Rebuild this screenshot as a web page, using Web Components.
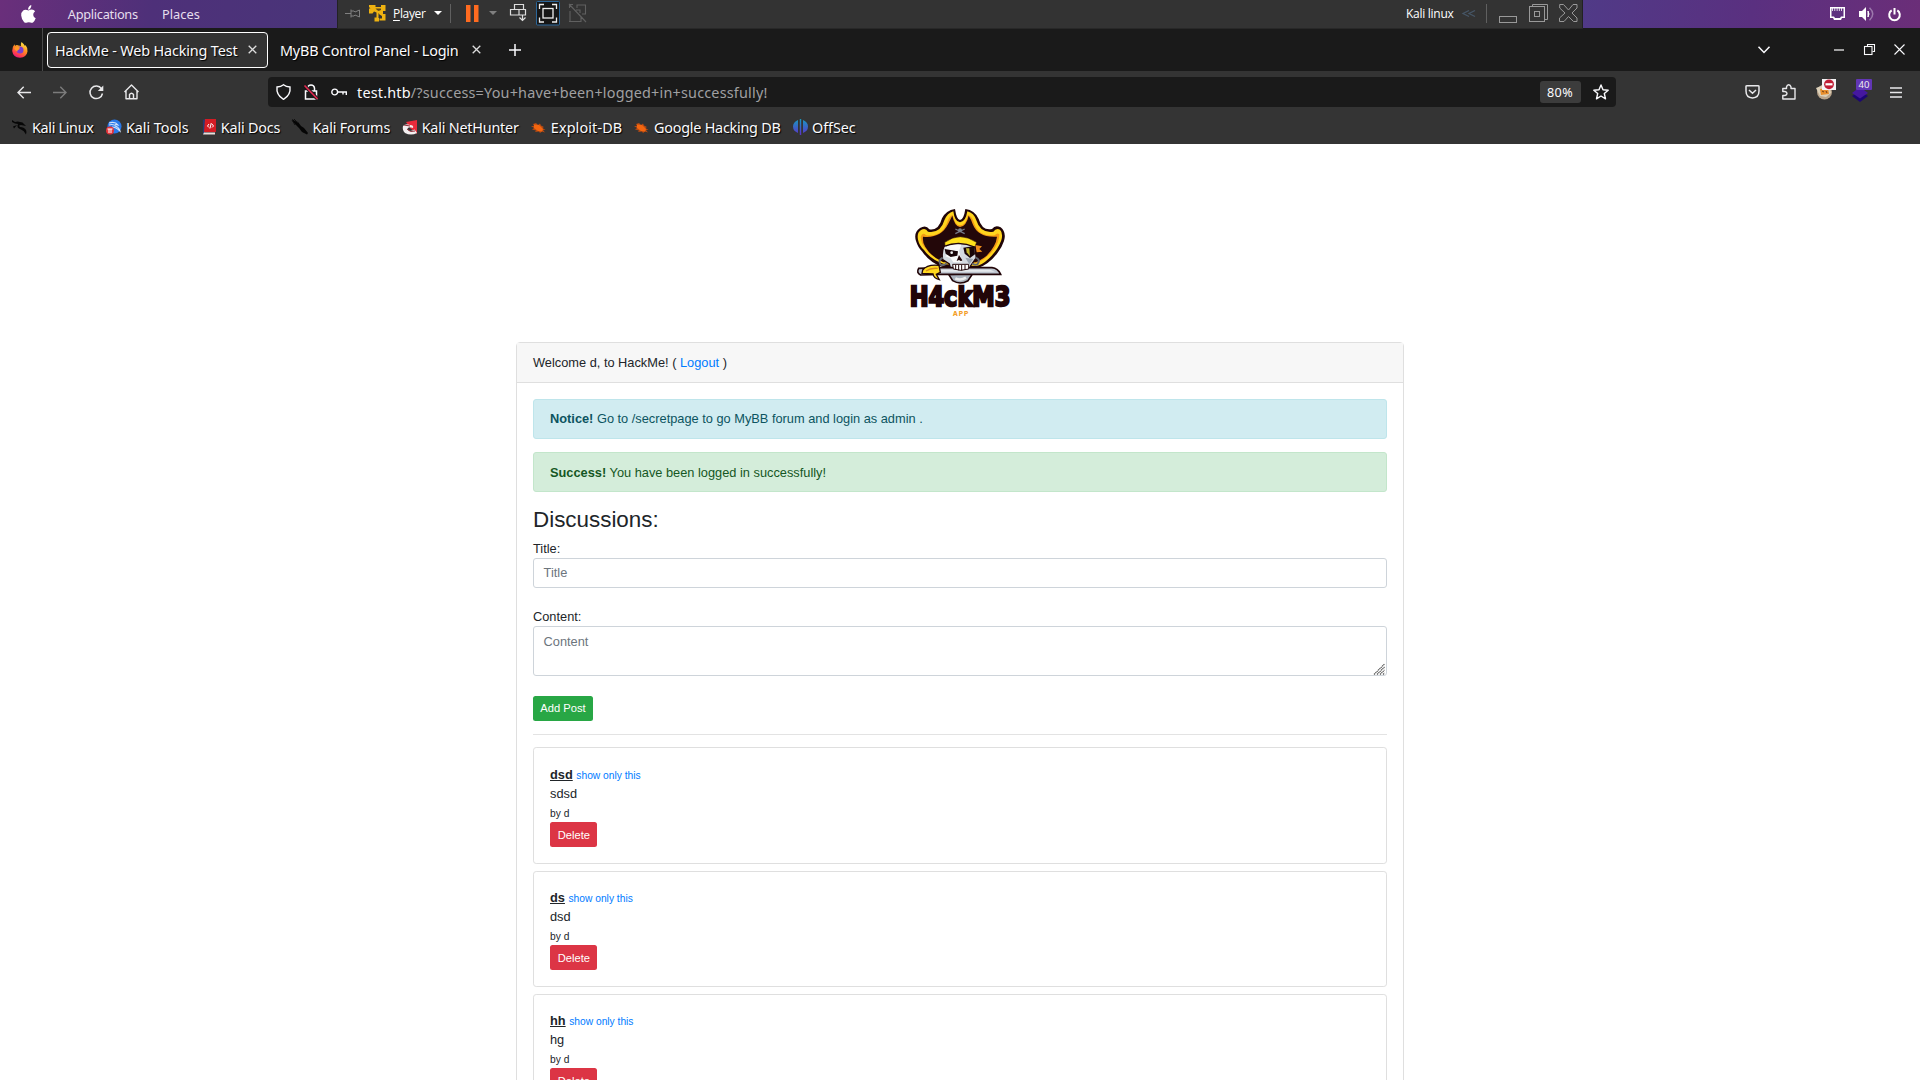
<!DOCTYPE html>
<html lang="en">
<head>
<meta charset="utf-8">
<title>HackMe - Web Hacking Test</title>
<style>
html,body{margin:0;height:100%;overflow:hidden;background:#fff}
</style>
</head>
<body>
<desktop-screen></desktop-screen>
<script>
const define = (name, html, setup) => {
  const tpl = document.createElement('template');
  tpl.innerHTML = html;
  customElements.define(name, class extends HTMLElement {
    constructor() {
      super();
      this.attachShadow({ mode: 'open' }).appendChild(tpl.content.cloneNode(true));
    }
    connectedCallback() { if (setup) setup(this, this.shadowRoot); }
  });
};

/* Single-line label that spreads its letters to fill the width in "w". */
define('fit-text', `<style>:host{display:block;flex:none;white-space:pre}span{display:inline-block}</style><span><slot></slot></span>`, (el, root) => {
  const w = +el.getAttribute('w');
  el.style.width = w + 'px';
  const span = root.querySelector('span');
  const n = el.textContent.length;
  const natural = span.getBoundingClientRect().width;
  if (natural) span.style.letterSpacing = ((w - natural) / n) + 'px';
});

const S = 'fill="none" stroke="currentColor"';
const dragon = '<path d="M0 1L3 3Q6 2 8 3Q11 3 12 5L14 7L9 6Q6 6 8 8Q12 8 14 11Q15 13 14 15.500Q12 11.500 9 10.500Q4 9 6 5Q3 5 0 3ZM1 7.500L5 6L2 9.500M9 1L13 3.500" fill="#070707"/>';
const bug = '<path d="M2 4L5 3L7 5L9 3.500L10 5.500L13 7L11.500 8L14.500 10L12 10L14 12.500L11 11.500L9 13L8 11.500L4 12L5 10.500L1 9.500L3 8L0 6L3 6Z" fill="#b84a12"/><path d="M3 4.500L8 5L12 9L11 11.500L7 11L3 8Z" fill="#f4660f"/>';
const ICONS = {
  apple: [15,18,'<path d="M10.300 0Q10.600 2.500 9 4Q8 4.900 7.100 4.600Q6.900 2.800 8.100 1.500Q9 .400 10.300 0ZM7.500 5.500Q9 4.600 10.700 4.600Q13 4.700 14.100 6.300Q12 7.800 12.200 10Q12.400 12.300 14.700 13.300Q13.700 16.200 12 17.500Q10.800 18.200 9.500 17.500Q7.700 16.800 6.200 17.500Q4.400 18.400 3 17Q.500 14.300 .200 10.500Q.100 7 2.200 5.400Q4 4.200 6 5Z" fill="#fff"/>'],
  pin: [15,9,`<path d="M0 4.500H6M6 .500V8.500M6 2H9L10 3L14.500 1V8L10 6L9 7H6" ${S}/>`],
  vmlogo: [17,17,'<path d="M0 0H6.500V2H12V0H16.500V6H14V9H16.500V15.500H10.500V13.500H13V11L10.500 9.500L9.500 8V13H10V16.500H5.500V12.500H7.500V7.500L5 6.500L3.500 8.500H0V3.500H1.500L0 2Z" fill="#eeb211"/><path d="M6.500 3.500H12V5L9.500 6L8 5Z" fill="#5d4a1c"/>'],
  caret: [8,4,'<path d="M0 0H8L4 4Z" fill="currentColor"/>'],
  pause: [13,17,'<path d="M0 0H4.500V17H0ZM8 0H12.500V17H8Z" fill="#ff6b20"/>'],
  cad: [17,18,`<path d="M4.500 .500H13.500V5.500H4.500ZM.500 5.500H9V11H.500ZM9 5.500H15.500V11H9M12.500 11V17M9.500 13.500L12.500 16.500L15.500 13.500" ${S} stroke-width="1.200"/>`],
  fullscreen: [24,24.5,`<rect x=".500" y=".500" width="23" height="23.500" rx="1" fill="#161616" stroke="#2b679b"/><path d="M3.500 8V3.500H8M16 3.500H20.500V8M3.500 16.500V21H8M16 21H20.500V16.500" ${S} stroke-width="1.300"/><rect x="7" y="7.500" width="10" height="9.500" ${S} stroke-width="1.300"/>`],
  unity: [18,19,`<path d="M.500 4V.500H4M8 4V1H16.500V10H13M1 7V17.500H12V13M0 17.500H4M0 0L17 18M7 6H11V9" ${S} stroke-width="1.100"/>`],
  chev2: [14,9,`<path d="M7 1.500L1 4.500L7 7.500M13 1.500L7 4.500L13 7.500" ${S} stroke-width="1.200"/>`],
  vmin: [18,7,`<rect x=".500" y=".500" width="17" height="6" ${S}/>`],
  vmax: [19,18,`<path d="M3.500 2V.500H18.500V15.500H16" ${S}/><rect x=".500" y="2.500" width="15" height="15" ${S}/><rect x="5.500" y="7.500" width="5" height="5" ${S}/>`],
  vclose: [19,18,`<path d="M.700 .500H4.500L9.500 6L14 .500H18V4L13 9L18 14V17.500H14.500L9.500 12.500L5 17.500H.500V14L6 9L.700 4Z" ${S}/>`],
  net: [15,14,'<path d="M0 0H15V11H12L11 13H4L3 11H0Z" fill="#fff"/><path d="M1.500 1.500V9.500H4L5 11H10L11 9.500H13.500V1.500H12V4H11.200V1.500H9.700V4H8.900V1.500H7.500V4H6.700V1.500H5.200V4H4.400V1.500H3V4H2.200V1.500Z" fill="#5e3080"/>'],
  vol: [16,14,'<path d="M0 4H3L7 0V14L3 10H0Z" fill="#fff"/><path d="M9 4Q11 7 9 10Z" fill="#fff" stroke="#fff"/><path d="M10.500 .700Q17 7 10.500 13.300" fill="none" stroke="#9c78ac" stroke-width="1.500"/>'],
  power: [13,13,'<path d="M3.700 2.400A5.300 5.300 0 1 0 9.300 2.400M6.500 0V6.500" fill="none" stroke="#fff" stroke-width="2"/>'],
  firefox: [16,16,'<defs><linearGradient id="f" x1=".8" y1="0" x2=".3" y2="1"><stop offset="0" stop-color="#fff44f"/><stop offset=".45" stop-color="#ff9020"/><stop offset=".8" stop-color="#ff3b4f"/><stop offset="1" stop-color="#e31587"/></linearGradient></defs><path d="M9.500 0Q12 2 13 4L13.500 3Q16 6 15.500 9.500Q14.500 15.500 8 15.800Q1 15.300 .200 9Q0 5 2.500 2.200L3 4Q4.500 2.500 6.500 3.500L9 4Q8.500 2 9.500 0Z" fill="url(#f)"/><circle cx="8" cy="8" r="3.500" fill="#7a3ed0"/><path d="M2.500 6Q5 4 8 5.500L7 7.500Q5 8 5.500 9.500Q4 9 2.500 7" fill="#ff9a26"/>'],
  x: [9,9,`<path d="M.700 .700L8.300 8.300M8.300 .700L.700 8.300" ${S} stroke-width="1.300"/>`],
  plus: [12,12,`<path d="M6 0V12M0 6H12" ${S} stroke-width="1.500"/>`],
  down: [12,8,`<path d="M.500 .700L6 6.500L11.500 .700" ${S} stroke-width="1.500"/>`],
  min: [10,2,`<path d="M0 1H10" ${S} stroke-width="1.200"/>`],
  restore: [11,11,`<path d="M3.500 2.500V.500H10.500V7.500H8.500" ${S} stroke-width="1.100"/><rect x=".500" y="2.500" width="7.500" height="8" ${S} stroke-width="1.100"/>`],
  close: [11,11,`<path d="M.500 .500L10.500 10.500M10.500 .500L.500 10.500" ${S} stroke-width="1.100"/>`],
  back: [14,13,`<path d="M14 6.500H1M6.700 .700L1 6.500L6.700 12.300" ${S} stroke-width="1.400"/>`],
  fwd: [14,13,`<path d="M0 6.500H13M7.300 .700L13 6.500L7.300 12.300" ${S} stroke-width="1.400"/>`],
  reload: [15,15,`<path d="M12.500 3.700A6.300 6.300 0 1 0 13.500 8.500" ${S} stroke-width="1.500"/><path d="M14.300 .500V6H8.800Z" fill="currentColor"/>`],
  home: [15,16,`<path d="M.500 8L7.500 1L14.500 8M2 7V14.800H13V7M5.500 14.500V10.500Q7.500 8 9.500 10.500V14.500" ${S} stroke-width="1.400" stroke-linejoin="round"/>`],
  shield: [15,16,`<path d="M7.500 .700Q10 2.700 14 3Q15 11 7.500 15.300Q0 11 1 3Q5 2.700 7.500 .700Z" ${S} stroke-width="1.400"/>`],
  lock: [14,16,`<path d="M3.500 7V4Q4 1 7 1T10.500 4V7M1.500 7H12.500V15H1.500Z" ${S} stroke-width="1.500"/><path d="M.500 1.500L13.500 15" stroke="#1a1a1a" stroke-width="3.500"/><path d="M.500 1.500L13.500 15" stroke="#e22850" stroke-width="1.700"/>`],
  key: [16,8,`<circle cx="3.700" cy="4" r="2.900" ${S} stroke-width="1.400"/><path d="M6.500 4H15.300V7M12 4V6.500" ${S} stroke-width="1.400"/>`],
  star: [16,16,`<path d="M8 1L10 5.800L15.200 6.200L11.300 9.500L12.500 14.800L8 12L3.500 14.800L4.700 9.500L.800 6.200L6 5.800Z" ${S} stroke-width="1.400" stroke-linejoin="round"/>`],
  pocket: [15,14,`<path d="M1 1.500Q1 .800 2 .800H13Q14 .800 14 1.500V6Q14 12.500 7.500 13Q1 12.500 1 6ZM4 5L7.500 8.300L11 5" ${S} stroke-width="1.500"/>`],
  puzzle: [14,16,`<path d="M4.500 4.500V3Q5 .800 6.700 .800T9 3V4.500H13V15H.800V11.500H3Q5 11 5 9.500T3 7.500H.800V4.500Z" ${S} stroke-width="1.400" stroke-linejoin="round"/>`],
  cookie: [20,21,'<circle cx="8.500" cy="13" r="7.500" fill="#b9a48b"/><path d="M0 9L5 7L14 9L15 14L10 18L4 17Z" fill="#dcd0b9"/><path d="M4 10L12 9L13 15L5 16Z" fill="#e98f2d"/><path d="M6 12L8 13M10 12L11 14" stroke="#704018"/><rect x="6" y="0" width="14" height="11" fill="#f4f4f6"/><circle cx="13" cy="5.300" r="4.900" fill="#c01d35"/><rect x="9.500" y="4.200" width="7" height="2.200" fill="#fff"/>'],
  diamond: [16,15,'<path d="M0 9L8 4L16 9L8 15Z" fill="#1c0674"/><path d="M0 6L8 0L16 6L8 11.500Z" fill="#45189f"/>'],
  menu: [12,11,`<path d="M0 1H12M0 5.500H12M0 10H12" ${S} stroke-width="1.300"/>`],
  kali: [16,16,dragon],
  tools: [16,16,'<circle cx="8.500" cy="7.500" r="7" fill="#2878e8"/><path d="M3 4Q9 2 12 6Q8 5 9 7Q13 8 14 12Q10 8 6 8M3 6Q6 5 8 6" stroke="#cfe2fb" fill="none" stroke-width="1.100"/><circle cx="4" cy="11.500" r="4" fill="#e33238"/><path d="M1.500 10H6.500M3 10V14M5 10V14" stroke="#fff"/>'],
  docs: [13,16,'<path d="M0 1L2 0V14L0 15Z" fill="#253a74"/><path d="M2 0H13V13H1Z" fill="#d31c24"/><path d="M1 13.500H12V15.500H0Z" fill="#e9dedc"/><path d="M6 5L4.500 7L6 8.500M9 5L10.500 7L9 8.500M8.300 4L6.900 9.500" stroke="#fff" fill="none"/>'],
  forums: [17,16,'<path d="M0 0L3 2L6 3L9 7L12 9L16 14L15 15.500L10 13L7 9L4 6L1 3Z" fill="#050505"/><path d="M0 1L3 6M2 0L6 4" stroke="#111"/>'],
  nethunter: [15,15,'<path d="M4 2L15 0V14L8 8Z" fill="#e92b3b"/><path d="M1 6Q4 3 8 5Q12 5 11 8Q6 6 5.500 9Q7 12.500 12.500 9.500L15 13Q9 16 3 13Q0 10 1 6Z" fill="#f3eff0"/><path d="M2 5L8 6M5 9Q8 13 13 11" stroke="#8c2935" fill="none"/>'],
  bug: [15,15,bug],
  offsec: [15,16,'<defs><linearGradient id="o" x1="0" y1="0" x2="0" y2="1"><stop offset="0" stop-color="#1799bf"/><stop offset="1" stop-color="#5b31c9"/></linearGradient></defs><path d="M5 1V14Q0 12 0 7.500T5 1ZM6.800 0H8.200V16H6.800ZM10 1Q15 3 15 7.500T10 14Z" fill="url(#o)"/>'],
  grip: [11,11,'<path d="M0 10.500L10.500 0M3 10.500L10.500 3M6 10.500L10.500 6M9 10.500L10.500 9" stroke="#505050" stroke-width="1.100" stroke-dasharray="1.400 .5"/>'],
};
define('ui-icon', `<style>:host{display:block;flex:none}svg{display:block;overflow:visible}</style>`, (el, root) => {
  const [w, h, body] = ICONS[el.getAttribute('name')];
  root.innerHTML += `<svg width="${w}" height="${h}" viewBox="0 0 ${w} ${h}">${body}</svg>`;
});

define('top-bar', `<style>
:host{display:flex;height:28px;font:12.800px "Noto Sans",sans-serif;color:#e6deed;flex:none}
div{display:flex;align-items:center;box-sizing:border-box}
.l{width:337px;background:linear-gradient(100deg,#6a2f7b,#4e3079 45%,#493579)}
.vm{width:1246px;height:29px;background:#333;border-left:1px solid #222;border-right:1px solid #222;border-bottom:1px solid #282828;color:#fff;font:12px "Open Sans",sans-serif;z-index:1;padding-bottom:2px}
.r{width:337px;background:linear-gradient(100deg,#503a87,#5a3080 50%,#6b2e78)}
.sep{width:1px;height:19px;background:#606060}
u{text-underline-offset:2px}
</style>
<div class="l"><ui-icon name="apple" style="margin-left:20.500px"></ui-icon><fit-text w="70" style="margin-left:32.300px">Applications</fit-text><fit-text w="38" style="margin-left:24.200px">Places</fit-text></div>
<div class="vm">
<ui-icon name="pin" style="margin-left:6.500px;color:#808080"></ui-icon>
<ui-icon name="vmlogo" style="margin-left:9.500px"></ui-icon>
<fit-text w="32.500" style="margin-left:7px"><u>P</u>layer</fit-text>
<ui-icon name="caret" style="margin-left:8px"></ui-icon>
<div class="sep" style="margin-left:8.500px"></div>
<ui-icon name="pause" style="margin-left:14.500px"></ui-icon>
<ui-icon name="caret" style="margin-left:10px;color:#808080"></ui-icon>
<ui-icon name="cad" style="margin-left:13px;color:#ddd"></ui-icon>
<ui-icon name="fullscreen" style="margin-left:9px;color:#eee"></ui-icon>
<ui-icon name="unity" style="margin-left:9px;color:#606060"></ui-icon>
<fit-text w="47.500" style="margin-left:819.500px">Kali linux</fit-text>
<ui-icon name="chev2" style="margin-left:8px;color:#475768"></ui-icon>
<div class="sep" style="margin-left:10px"></div>
<ui-icon name="vmin" style="margin-left:12px;margin-top:13px;color:#999"></ui-icon>
<ui-icon name="vmax" style="margin-left:12px;color:#999"></ui-icon>
<ui-icon name="vclose" style="margin-left:11px;color:#999"></ui-icon>
</div>
<div class="r"><ui-icon name="net" style="margin-left:247px"></ui-icon><ui-icon name="vol" style="margin-left:14px"></ui-icon><ui-icon name="power" style="margin-left:12.500px"></ui-icon></div>`);

define('browser-tab', `<style>
:host{display:flex;align-items:center;box-sizing:border-box;height:36px;border-radius:4px;border:1px solid transparent;flex:none;color:#fbfbfe;text-shadow:1px 1px 1px #000}
:host([active]){border-color:#fff;background:#333}
ui-icon{margin-left:auto;color:#ddd}
</style><slot></slot><ui-icon name="x"></ui-icon>`);

define('tab-strip', `<style>
:host{display:flex;align-items:center;height:43px;background:#1a1a1a;flex:none;font:14.400px "Noto Sans",sans-serif;color:#fbfbfe}
.div{width:1px;height:43px;background:#4a4a4a;margin-left:14px}
browser-tab{padding:0 10px 0 7px}
browser-tab fit-text{padding-top:1.500px}
</style>
<ui-icon name="firefox" style="margin-left:12px"></ui-icon><div class="div"></div>
<browser-tab active style="margin-left:4px;width:221px"><fit-text w="182.500">HackMe - Web Hacking Test</fit-text></browser-tab>
<browser-tab style="margin-left:4px;width:220px"><fit-text w="178.500">MyBB Control Panel - Login</fit-text></browser-tab>
<ui-icon name="plus" style="margin-left:16.500px"></ui-icon>
<ui-icon name="down" style="margin-left:1237.500px"></ui-icon>
<ui-icon name="min" style="margin-left:64px"></ui-icon>
<ui-icon name="restore" style="margin-left:19.500px"></ui-icon>
<ui-icon name="close" style="margin-left:19px"></ui-icon>`);

define('url-bar', `<style>
:host{display:flex;align-items:center;width:1348px;height:30px;background:#1a1a1a;border-radius:4px;flex:none;color:#fbfbfe}
.url{color:#a0a0a2;margin-left:10.500px}
b{font-weight:400;color:#fbfbfe}
.zoom{width:41px;height:22px;border-radius:3px;background:#3c3c3c;display:flex;align-items:center;justify-content:center;font-size:12.600px;margin-left:772px}
</style>
<ui-icon name="shield" style="margin-left:7.500px"></ui-icon>
<ui-icon name="lock" style="margin-left:13px"></ui-icon>
<ui-icon name="key" style="margin-left:13px"></ui-icon>
<fit-text class="url" w="410.500"><b>test.htb</b>/?success=You+have+been+logged+in+successfully!</fit-text>
<div class="zoom"><fit-text w="26">80%</fit-text></div>
<ui-icon name="star" style="margin-left:12px"></ui-icon>`);

define('nav-bar', `<style>
:host{display:flex;align-items:center;height:42px;flex:none;font:14.400px "Noto Sans",sans-serif;color:#e8e8ea}
.ext{position:relative;width:16px;height:15px;margin:4px 0 0 16px;flex:none}
.badge{position:absolute;left:4px;top:-8px;width:16px;height:11px;border-radius:1px;background:#6236b5;color:#eee;font-size:9.500px;line-height:11px;text-align:center}
</style>
<ui-icon name="back" style="margin-left:17px"></ui-icon>
<ui-icon name="fwd" style="margin-left:22px;color:#7c7c7c"></ui-icon>
<ui-icon name="reload" style="margin-left:21.500px"></ui-icon>
<ui-icon name="home" style="margin-left:20.500px"></ui-icon>
<url-bar style="margin-left:129px"></url-bar>
<ui-icon name="pocket" style="margin-left:128.500px"></ui-icon>
<ui-icon name="puzzle" style="margin-left:22px"></ui-icon>
<ui-icon name="cookie" style="margin-left:20.500px;margin-bottom:5px"></ui-icon>
<div class="ext"><ui-icon name="diamond"></ui-icon><div class="badge">40</div></div>
<ui-icon name="menu" style="margin-left:22px"></ui-icon>`);

define('book-mark', `<style>:host{display:flex;align-items:center;flex:none}</style><slot></slot>`);
define('bookmarks-bar', `<style>
:host{display:flex;align-items:center;height:29px;box-sizing:border-box;padding:0 0 1px 12px;flex:none;font:14.400px "Noto Sans",sans-serif;color:#fbfbfe;text-shadow:1px 1px 1px #000}
</style>
<book-mark><ui-icon name="kali"></ui-icon><fit-text style="margin-left:4px" w="61.500">Kali Linux</fit-text></book-mark>
<book-mark style="margin-left:12.500px"><ui-icon name="tools"></ui-icon><fit-text style="margin-left:4px" w="62.500">Kali Tools</fit-text></book-mark>
<book-mark style="margin-left:14px"><ui-icon name="docs"></ui-icon><fit-text style="margin-left:5.300px" w="59.500">Kali Docs</fit-text></book-mark>
<book-mark style="margin-left:12px"><ui-icon name="forums"></ui-icon><fit-text style="margin-left:3.300px" w="77.500">Kali Forums</fit-text></book-mark>
<book-mark style="margin-left:12.300px"><ui-icon name="nethunter"></ui-icon><fit-text style="margin-left:4.300px" w="97">Kali NetHunter</fit-text></book-mark>
<book-mark style="margin-left:12.600px"><ui-icon name="bug"></ui-icon><fit-text style="margin-left:4.500px" w="71.500">Exploit-DB</fit-text></book-mark>
<book-mark style="margin-left:12px"><ui-icon name="bug"></ui-icon><fit-text style="margin-left:4.800px" w="126.500">Google Hacking DB</fit-text></book-mark>
<book-mark style="margin-left:12px"><ui-icon name="offsec"></ui-icon><fit-text style="margin-left:4.500px" w="43.500">OffSec</fit-text></book-mark>`);

define('site-logo', `<style>:host{display:block}svg{display:block;margin:0 auto}</style>
<svg width="140" height="130" viewBox="0 0 420 390">
<path d="M195 42Q200 75 210 75Q221 75 226 42Q255 46 266 72Q276 108 306 102Q316 88 332 97Q350 112 342 138Q336 156 324 172Q298 208 262 220L158 216Q120 204 97 170Q84 158 78 138Q70 112 90 99Q108 88 118 103Q146 108 156 70Q168 46 195 42Z" fill="#200508"/>
<path d="M190 49Q194 81 210 82Q227 81 232 49Q252 54 259 76Q271 116 310 110Q318 98 330 104Q340 114 334 136Q322 168 296 191Q276 210 258 213L164 208Q122 194 102 165Q88 152 84 134Q80 114 92 106Q106 96 114 110Q152 116 163 76Q172 54 190 49Z" fill="#ffd51e"/>
<path d="M188 59Q194 90 210 91Q228 90 234 59Q247 64 252 84Q266 126 314 121Q322 112 328 118Q328 140 312 162Q294 188 262 204L158 200Q122 184 106 160Q94 148 92 126Q98 110 108 121Q154 127 171 84Q176 65 188 59Z" fill="#f39a16"/>
<path d="M187 62Q194 94 210 96Q229 94 236 62Q243 72 248 87Q264 129 321 125Q318 154 288 184Q270 198 256 202H160Q122 184 106 156Q97 144 99 125Q152 131 174 88Z" fill="#230709"/>
<path d="M196 102L224 116M224 102L196 116" stroke="#737987" stroke-width="4"/><circle cx="210" cy="106" r="6" fill="#7b8490"/>
<path d="M164 142Q210 108 260 142L254 158Q210 140 165 156Z" fill="#ffe01c" stroke="#210508" stroke-width="2"/><path d="M256 150L276 154L268 162L277 170L260 172Z" fill="#ee8d1c"/>
<path d="M162 154Q208 136 254 156L259 188L242 212L237 232L184 230L178 207L158 194Q154 170 162 154Z" fill="#d5dae0" stroke="#210508" stroke-width="4"/>
<path d="M172 154Q192 146 214 149L207 168L216 202H190L182 190L166 184Q176 176 164 166Z" fill="#fafafa"/>
<path d="M164 162L204 169L202 182L182 186L167 176ZM220 158L253 153L255 178L240 189L224 176Z" fill="#190508"/><circle cx="185" cy="173" r="4" fill="#eee"/><path d="M165 157L206 166" stroke="#f7f7f7" stroke-width="4"/>
<path d="M207 180L200 198L207 195L213 199L217 196Z" fill="#210508"/><path d="M228 160L238 160L240 184L230 172Z" fill="#c3b52a"/><path d="M226 188L250 192L238 208Z" fill="#9aa3af"/>
<path d="M158 188Q143 196 151 208Q160 214 170 205M256 187Q273 193 263 207Q254 212 247 205" fill="none" stroke="#63666f" stroke-width="6"/>
<path d="M176 238L188 257Q210 271 234 257L248 236Z" fill="#aab2bd" stroke="#210508" stroke-width="5"/><path d="M196 250Q211 258 228 248" stroke="#eee" stroke-width="8" fill="none"/>
<path d="M86 220L145 218H306Q324 220 332 238H150L92 240Q78 233 86 220Z" fill="#bec5cf" stroke="#210508" stroke-width="5"/><path d="M148 224H300L315 230H150Z" fill="#e6e9ed"/>
<path d="M188 208H236V222Q212 230 190 222Z" fill="#fff" stroke="#210508" stroke-width="3"/><path d="M197 210V224M206 210V226M215 210V226M225 210V224" stroke="#210508" stroke-width="3"/>
<path d="M98 225Q112 207 147 211L151 232L139 238L148 254Q131 250 129 237L96 235Z" fill="#ffd91f" stroke="#210508" stroke-width="4"/><path d="M108 228Q122 218 143 220" stroke="#d98b15" stroke-width="4" fill="none"/>
<text x="59" y="334" textLength="302" lengthAdjust="spacingAndGlyphs" font-family="DejaVu Sans,sans-serif" font-weight="700" font-size="79" fill="#210508" stroke="#210508" stroke-width="7">H4ckM3</text>
<text x="188" y="363" textLength="47" font-family="Inter,sans-serif" font-weight="800" font-size="20" fill="#f3a02c">APP</text>
</svg>`);

define('alert-box', `<style>
:host{display:block;box-sizing:border-box;height:40px;padding:9.600px 16px;margin-bottom:13px;border:1px solid;border-radius:3px}
:host([kind=info]){color:#0c5460;background:#d1ecf1;border-color:#bee5eb;padding-top:9px}
:host([kind=success]){color:#155724;background:#d4edda;border-color:#c3e6cb}
</style><slot></slot>`);

define('form-field', `<style>
:host{display:block}
.box{display:flex;box-sizing:border-box;height:var(--h,30px);padding:4.300px 9.600px;border:1px solid #ced4da;border-radius:3px;color:#6c757d;justify-content:space-between}
label{display:block}
ui-icon{display:none;align-self:flex-end;margin:0 -8.600px -4px 0}
:host([area]) ui-icon{display:block}
</style><label><slot name="label"></slot></label><div class="box"><slot></slot><ui-icon name="grip"></ui-icon></div>`);

define('action-button', `<style>
:host{display:flex;box-sizing:border-box;align-items:center;justify-content:center;height:25px;border-radius:2.500px;color:#fff;font-size:11.200px;line-height:16.800px}
:host([kind=success]){background:#28a745;width:60px}
:host([kind=danger]){background:#dc3545;width:47px;padding:1.400px 0 0 .600px}
</style><slot></slot>`);

define('post-card', `<style>
:host{display:block;box-sizing:border-box;height:116.400px;margin-bottom:6.800px;padding:16.200px 16px;border:1px solid #dfdfdf;border-radius:3.200px}
p{margin:0;height:19.200px}
p.by{height:18.800px}
small{font-size:10.240px}
a{color:#007bff}
b{text-decoration:underline}
</style><p><b><slot name="title"></slot></b> <small><a>show only this</a></small></p><p><slot></slot></p><p class="by"><small>by d</small></p><action-button kind="danger">Delete</action-button>`);

define('discussion-card', `<style>
:host{display:block;box-sizing:border-box;width:888px;height:900px;margin:17px auto 0;border:1px solid #dfdfdf;border-radius:4px;background:#fff}
header{box-sizing:border-box;height:40px;padding:10px 16px;background:#f7f7f7;border-bottom:1px solid #dfdfdf}
main{padding:16px 16px 0}
a{color:#007bff}
h4{font-size:22.400px;font-weight:400;line-height:26.880px;margin:0;padding:2px 0 4.400px}
hr{border:0;height:1px;background:#e3e3e3;margin:13px 0 12.100px}
</style>
<header>Welcome d, to HackMe! ( <a>Logout</a> )</header>
<main>
<alert-box kind="info"><b>Notice!</b> Go to /secretpage to go MyBB forum and login as admin .</alert-box>
<alert-box kind="success"><b>Success!</b> You have been logged in successfully!</alert-box>
<h4>Discussions:</h4>
<form-field style="padding-top:.600px"><span slot="label">Title:</span>Title</form-field>
<form-field area style="margin-top:19px;--h:50px"><span slot="label">Content:</span>Content</form-field>
<action-button kind="success" style="margin-top:20px">Add Post</action-button>
<hr>
<post-card><span slot="title">dsd</span>sdsd</post-card>
<post-card><span slot="title">ds</span>dsd</post-card>
<post-card><span slot="title">hh</span>hg</post-card>
</main>`);

define('desktop-screen', `<style>
:host{display:flex;flex-direction:column;width:1920px;height:1080px;overflow:hidden}
.chrome{height:73px;background:#343434;flex:none}
.page{flex:1;min-height:0;overflow:hidden;font:12.800px/19.200px "Liberation Sans",sans-serif;color:#212529;background:#fff;padding-top:51px}
</style>
<top-bar></top-bar><tab-strip></tab-strip>
<div class="chrome"><nav-bar></nav-bar><bookmarks-bar></bookmarks-bar></div>
<div class="page"><site-logo></site-logo><discussion-card></discussion-card></div>`);
</script>
</body>
</html>
